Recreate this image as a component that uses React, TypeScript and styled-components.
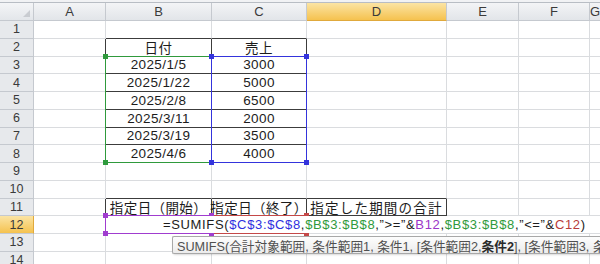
import styled, {createGlobalStyle} from 'styled-components';

const COLS = ['A', 'B', 'C', 'D', 'E', 'F', 'G'];
const ROWS = Array.from({length: 14}, (_, i) => i + 1);

const VALUES: Record<string, string> = {
    B2: '日付',
    C2: '売上',
    B3: '2025/1/5',
    C3: '3000',
    B4: '2025/1/22',
    C4: '5000',
    B5: '2025/2/8',
    C5: '6500',
    B6: '2025/3/11',
    C6: '2000',
    B7: '2025/3/19',
    C7: '3500',
    B8: '2025/4/6',
    C8: '4000',
    B11: '指定日（開始）',
    C11: '指定日（終了）',
    D11: '指定した期間の合計',
};

const ACTIVE_COL = 'D';
const ACTIVE_ROW = 12;

// cells that carry a thin black border in the sheet
const isBoxed = (c: number, r: number) =>
    (r >= 2 && r <= 8 && (c === 1 || c === 2)) || (r === 11 && c >= 1 && c <= 3);

const RANGES = [
    {color: '#2f9a3c', row: '4 / 10', col: '3 / 4'},
    {color: '#3434dc', row: '4 / 10', col: '4 / 5'},
    {color: '#c44848', row: '13 / 14', col: '4 / 5'},
    {color: '#a03ccf', row: '13 / 14', col: '3 / 4'},
];

const App = () => {
    return (
        <Sheet>
            <GlobalStyle />
            <TopStrip />
            <Grid>
                <Corner />
                {COLS.map((col) => (
                    <ColHead key={col} $active={col === ACTIVE_COL}>
                        {col}
                    </ColHead>
                ))}
                {ROWS.map((r) => [
                    <RowHead key={`h${r}`} $active={r === ACTIVE_ROW}>
                        {r}
                    </RowHead>,
                    ...COLS.map((col, c) => (
                        <Cell
                            key={`${col}${r}`}
                            $r={isBoxed(c, r) || isBoxed(c + 1, r)}
                            $b={isBoxed(c, r) || isBoxed(c, r + 1)}
                            $wide={col === 'D' && r === 11}
                        >
                            {VALUES[`${col}${r}`]}
                        </Cell>
                    )),
                ])}

                {RANGES.map((rg, i) => (
                    <RangeBox key={i} $color={rg.color} style={{gridRow: rg.row, gridColumn: rg.col}}>
                        <Handle $color={rg.color} $x="left" $y="top" />
                        <Handle $color={rg.color} $x="right" $y="top" />
                        <Handle $color={rg.color} $x="left" $y="bottom" />
                        <Handle $color={rg.color} $x="right" $y="bottom" />
                    </RangeBox>
                ))}

                <EditBox>
                    =SUMIFS(<Ref $color="#2f2fe0">$C$3:$C$8</Ref>,<Ref $color="#2f9a3c">$B$3:$B$8</Ref>
                    ,”&gt;=”&amp;<Ref $color="#9b36c8">B12</Ref>,<Ref $color="#2f9a3c">$B$3:$B$8</Ref>
                    ,”&lt;=”&amp;<Ref $color="#b83a3a">C12</Ref>)
                </EditBox>

                <Tooltip>
                    SUMIFS(合計対象範囲, 条件範囲1, 条件1, [条件範囲2, <b>条件2</b>], [条件範囲3, 条件3], ...)
                </Tooltip>
            </Grid>
        </Sheet>
    );
};

export default App;

const GlobalStyle = createGlobalStyle`
    body {
        margin: 0;
        background: #ffffff;
        font-family: "Liberation Sans", "Noto Sans CJK JP", sans-serif;
    }
`;

const Sheet = styled.div`
    width: 600px;
    height: 264px;
    overflow: hidden;
    background: #ffffff;
`;

const TopStrip = styled.div`
    height: 2px;
    background: #f1f2f4;
    border-bottom: 1px solid #b8bdc4;
`;

const Grid = styled.div`
    position: relative;
    display: grid;
    grid-template-columns: 34px 72px 106px 95px 140px 72px 71px 1fr;
    grid-template-rows: 18px repeat(14, 17.75px);
`;

const headBase = `
    box-sizing: border-box;
    display: flex;
    align-items: center;
    justify-content: center;
    color: #3a3a3a;
    font-size: 13px;
    border-right: 1px solid #c5c9cf;
    border-bottom: 1px solid #c5c9cf;
`;

const Corner = styled.div`
    ${headBase};
    position: relative;
    background: linear-gradient(#f4f5f7, #e3e6ea);
    &::after {
        content: '';
        position: absolute;
        right: 3px;
        bottom: 3px;
        border-left: 7px solid transparent;
        border-bottom: 7px solid #c9ccd1;
    }
`;

const ColHead = styled.div<{$active: boolean}>`
    ${headBase};
    background: ${({$active}) =>
        $active ? 'linear-gradient(#fbe4a4, #f5c24f)' : 'linear-gradient(#f3f4f6, #e2e5e9)'};
    border-bottom-color: ${({$active}) => ($active ? '#e0a93c' : '#c5c9cf')};
`;

const RowHead = styled.div<{$active: boolean}>`
    ${headBase};
    font-size: 12.5px;
    background: ${({$active}) => ($active ? 'linear-gradient(#fbe4a4, #f5c24f)' : '#e7e9ec')};
    border-right-color: ${({$active}) => ($active ? '#e0a93c' : '#c5c9cf')};
`;

const Cell = styled.div<{$r: boolean; $b: boolean; $wide: boolean}>`
    box-sizing: border-box;
    display: flex;
    align-items: center;
    justify-content: center;
    white-space: nowrap;
    color: #1c1c1c;
    font-size: 13.5px;
    letter-spacing: ${({$wide}) => ($wide ? '1.2px' : '0.4px')};
    border-right: 1px solid ${({$r}) => ($r ? '#3c3c3c' : '#dadcdf')};
    border-bottom: 1px solid ${({$b}) => ($b ? '#3c3c3c' : '#dadcdf')};
`;

const RangeBox = styled.div<{$color: string}>`
    position: absolute;
    inset: -1px 0 0 -1px;
    border: 1px solid ${({$color}) => $color};
`;

const Handle = styled.div<{$color: string; $x: 'left' | 'right'; $y: 'top' | 'bottom'}>`
    position: absolute;
    width: 5px;
    height: 5px;
    background: ${({$color}) => $color};
    ${({$x}) => $x}: -3px;
    ${({$y}) => $y}: -3px;
`;

const EditBox = styled.div`
    position: absolute;
    grid-row: 13 / 14;
    grid-column: 3 / -1;
    inset: 0 0 1px 53px;
    background: #ffffff;
    display: flex;
    align-items: center;
    padding-left: 4px;
    white-space: nowrap;
    font-size: 13px;
    letter-spacing: 0.65px;
    color: #1c1c1c;
`;

const Ref = styled.span<{$color: string}>`
    color: ${({$color}) => $color};
`;

const Tooltip = styled.div`
    position: absolute;
    grid-row: 14 / 15;
    grid-column: 3 / -1;
    top: 2px;
    left: 66px;
    height: 18px;
    box-sizing: border-box;
    padding: 0 4px;
    display: flex;
    align-items: center;
    white-space: nowrap;
    font-size: 12.7px;
    color: #505050;
    background: linear-gradient(#fdfdfd, #ececec);
    border: 1px solid #a8a8a8;
    border-right: none;
    border-radius: 2px 0 0 2px;
    box-shadow: 1px 1px 2px rgba(0, 0, 0, 0.15);

    b {
        color: #2a2a2a;
    }
`;
